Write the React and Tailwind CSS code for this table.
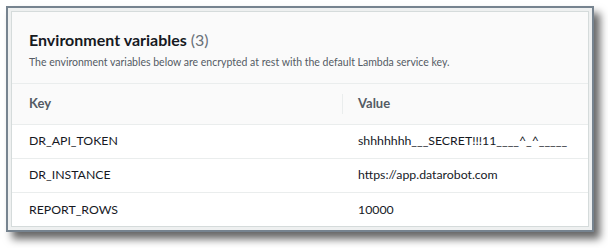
const rows = [
  { key: "DR_API_TOKEN", value: "shhhhhhh___SECRET!!!11____^_^_____" },
  { key: "DR_INSTANCE", value: "https://app.datarobot.com" },
  { key: "REPORT_ROWS", value: "10000" },
];

const App = () => {
  return (
    <div className="w-[608px] h-[248px] bg-white pt-[6px] pl-[6px] font-['Lato',sans-serif]">
      <div className="w-[588px] h-[226px] border-2 border-[#76838f] bg-[#eef0f0] p-[3px] shadow-[6px_7px_8px_rgba(0,0,0,0.6)]">
        <div className="h-full flex flex-col border border-[#d5dbdb] bg-white">
          <div className="h-[72px] shrink-0 bg-[#fafafa] border-b border-[#eaeded] px-[17px] pt-[17px]">
            <h2 className="text-[16px] leading-[22px] font-bold text-[#16191f]">
              Environment variables <span className="font-normal text-[#687078]">(3)</span>
            </h2>
            <p className="mt-[3px] text-[10.5px] leading-[16px] text-[#545b64]">
              The environment variables below are encrypted at rest with the default Lambda service key.
            </p>
          </div>

          <div className="h-[41px] shrink-0 bg-[#fafafa] border-b border-[#eaeded] flex items-center text-[13px] font-bold text-[#545b64]">
            <div className="w-[330px] shrink-0 pl-[17px]">Key</div>
            <div className="h-[20px] w-px shrink-0 bg-[#eaeded]" />
            <div className="pl-[15px]">Value</div>
          </div>

          {rows.map((row, i) => (
            <div
              key={row.key}
              className={`h-[34px] shrink-0 flex items-center text-[12.3px] text-[#16191f] ${
                i < rows.length - 1 ? "border-b border-[#eaeded]" : ""
              }`}
            >
              <div className="w-[331px] shrink-0 pl-[17px]">{row.key}</div>
              <div className="pl-[15px] whitespace-nowrap">{row.value}</div>
            </div>
          ))}
        </div>
      </div>
    </div>
  );
};

export default App;
